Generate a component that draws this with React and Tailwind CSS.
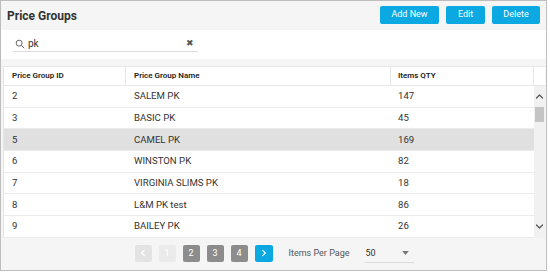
import React from 'react'

const rows = [
  { id: 2, name: 'SALEM PK', qty: 147 },
  { id: 3, name: 'BASIC PK', qty: 45 },
  { id: 5, name: 'CAMEL PK', qty: 169, active: true },
  { id: 6, name: 'WINSTON PK', qty: 82 },
  { id: 7, name: 'VIRGINIA SLIMS PK', qty: 18 },
  { id: 8, name: 'L&M PK test', qty: 86 },
  { id: 9, name: 'BAILEY PK', qty: 26 },
]

const Chevron = ({ dir = 'right', className = '' }) => {
  const d = {
    right: 'M4 2l4 4-4 4',
    left: 'M8 2L4 6l4 4',
    up: 'M2 8l4-4 4 4',
    down: 'M2 4l4 4 4-4',
  }[dir]
  return (
    <svg viewBox="0 0 12 12" className={className} fill="none" stroke="currentColor" strokeWidth="1.6" strokeLinecap="round" strokeLinejoin="round">
      <path d={d} />
    </svg>
  )
}

const App = () => {
  return (
    <div className="w-[550px] h-[272px] bg-white" style={{ fontFamily: 'Roboto, "Liberation Sans", sans-serif' }}>
      <div className="w-[547px] h-[271px] border border-[#bdbdbd] bg-[#f5f5f5] flex flex-col">
        {/* Title bar */}
        <div className="h-[29px] flex items-center justify-between pl-[6px] pr-[6px] shrink-0">
          <h1 className="text-[12px] font-bold text-[#333] mt-[1px]">Price Groups</h1>
          <div className="flex items-center gap-[7px] -mt-[1px]">
            <button className="h-[18px] w-[59px] rounded-[2px] bg-[#0ba8e2] text-white text-[9px]">Add New</button>
            <button className="h-[18px] w-[39px] rounded-[2px] bg-[#0ba8e2] text-white text-[9px]">Edit</button>
            <button className="h-[18px] w-[48px] rounded-[2px] bg-[#0ba8e2] text-white text-[9px]">Delete</button>
          </div>
        </div>

        {/* Search */}
        <div className="h-[29px] bg-white shrink-0 pl-[12px] pt-[6px]">
          <div className="w-[185px] h-[16px] border-b border-[#dcdcdc] flex items-center pl-[2px] pr-[4px]">
            <svg viewBox="0 0 12 12" className="w-[10px] h-[10px] text-[#666]" fill="none" stroke="currentColor" strokeWidth="1.2">
              <circle cx="5" cy="5" r="3.6" />
              <path d="M7.7 7.7l3 3" strokeLinecap="round" />
            </svg>
            <span className="ml-[3px] text-[10px] text-[#333] leading-none">pk</span>
            <span className="ml-auto text-[9px] text-[#555] leading-none">✖</span>
          </div>
        </div>

        {/* Table */}
        <div className="pt-[7px] pl-[2px] shrink-0">
          <div className="w-[542px] bg-white">
            <div className="flex h-[20px] border-t border-b border-[#e6e6e6] text-[8px] font-semibold text-[#222]">
              <div className="w-[123px] border-l border-r border-[#e6e6e6] pl-[8px] flex items-center">Price Group ID</div>
              <div className="w-[265px] border-r border-[#e6e6e6] pl-[8px] flex items-center">Price Group Name</div>
              <div className="w-[143px] border-r border-[#e6e6e6] pl-[7px] flex items-center">Items QTY</div>
              <div className="flex-1" />
            </div>
            <div className="flex">
              <div className="w-[531px] border-l border-[#e6e6e6]">
                {rows.map((r) => (
                  <div
                    key={r.id}
                    className={`flex h-[21.7px] items-center border-b border-[#ececec] text-[9.6px] text-[#333] ${r.active ? 'bg-[#e0e0e0]' : 'bg-white'}`}
                  >
                    <div className="w-[122px] pl-[8px]">{r.id}</div>
                    <div className="w-[265px] pl-[8px]">{r.name}</div>
                    <div className="flex-1 pl-[7px]">{r.qty}</div>
                  </div>
                ))}
              </div>
              <div className="w-[11px] bg-[#f1f1f1] flex flex-col items-center">
                <div className="h-[21px] flex items-center justify-center">
                  <Chevron dir="up" className="w-[9px] h-[9px] text-[#555]" />
                </div>
                <div className="w-[9px] h-[15px] bg-[#c4c4c4]" />
                <div className="mt-auto h-[22px] flex items-center justify-center">
                  <Chevron dir="down" className="w-[9px] h-[9px] text-[#555]" />
                </div>
              </div>
            </div>
          </div>
        </div>

        {/* Footer */}
        <div className="flex-1 flex items-center justify-center pl-[2px] pb-[1px]">
          <div className="flex items-center gap-[7px]">
            <div className="w-[17px] h-[17px] rounded-[2px] bg-[#e3e3e3] flex items-center justify-center">
              <Chevron dir="left" className="w-[8px] h-[8px] text-white" />
            </div>
            <div className="w-[17px] h-[17px] rounded-[2px] bg-[#ebebeb] text-white text-[9px] flex items-center justify-center">1</div>
            <div className="w-[17px] h-[17px] rounded-[2px] bg-[#8c8c8c] text-white text-[9px] flex items-center justify-center">2</div>
            <div className="w-[17px] h-[17px] rounded-[2px] bg-[#8c8c8c] text-white text-[9px] flex items-center justify-center">3</div>
            <div className="w-[17px] h-[17px] rounded-[2px] bg-[#8c8c8c] text-white text-[9px] flex items-center justify-center">4</div>
            <div className="w-[18px] h-[17px] rounded-[2px] bg-[#0ba8e2] flex items-center justify-center">
              <Chevron dir="right" className="w-[8px] h-[8px] text-white" />
            </div>
          </div>
          <span className="ml-[16px] text-[9px] text-[#555]">Items Per Page</span>
          <div className="ml-[16px] w-[49px] h-[18px] border-b border-[#dcdcdc] flex items-center mt-[1px]">
            <span className="text-[9px] text-[#333]">50</span>
            <svg viewBox="0 0 10 6" className="ml-auto mr-[5px] w-[7px] h-[4px] text-[#777]" fill="currentColor">
              <path d="M0 0h10L5 6z" />
            </svg>
          </div>
        </div>
      </div>
    </div>
  )
}

export default App
